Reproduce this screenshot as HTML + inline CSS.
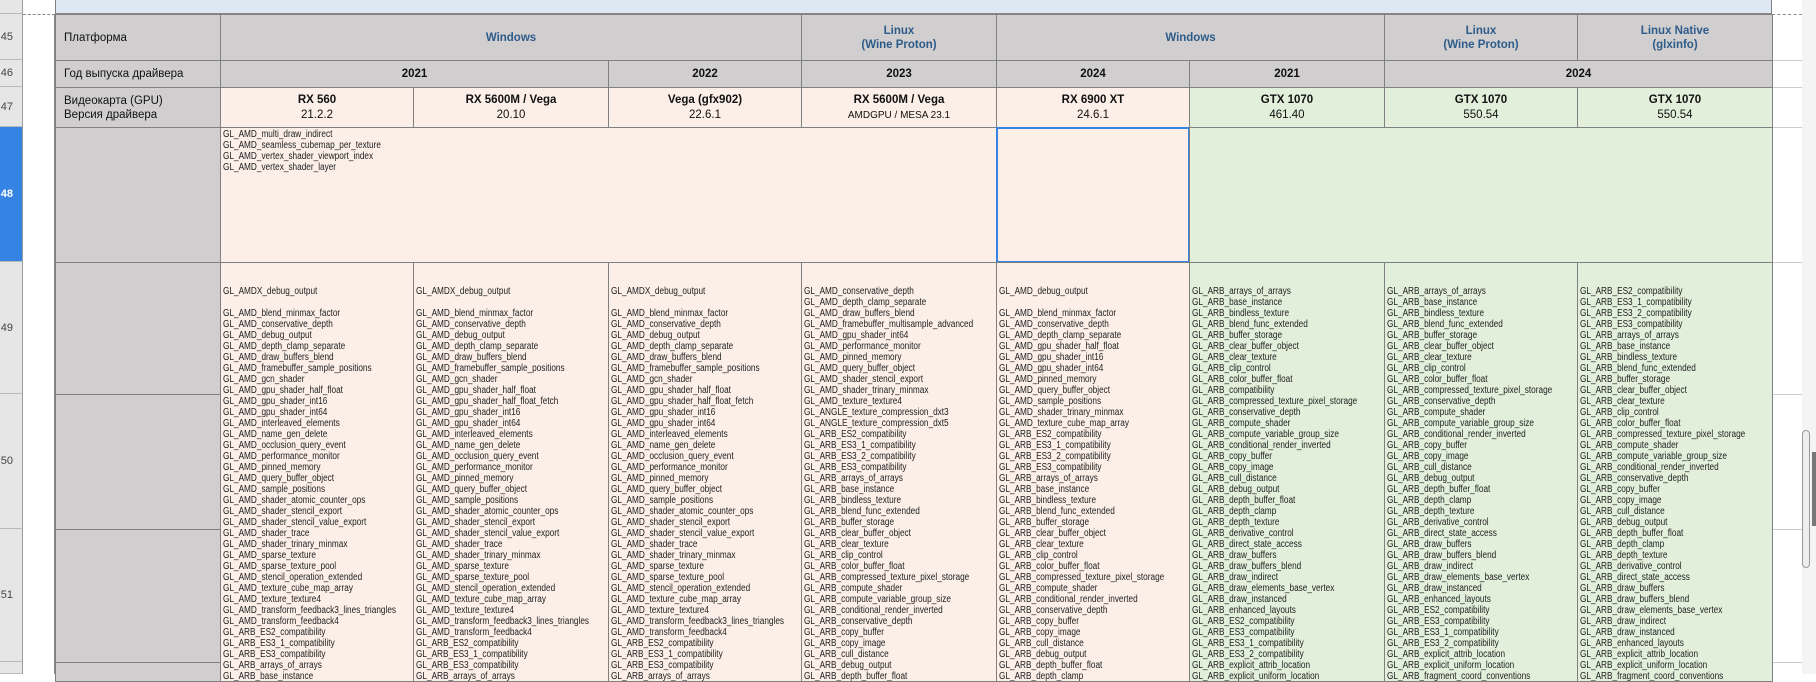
<!DOCTYPE html>
<html><head><meta charset="utf-8"><style>
*{margin:0;padding:0;box-sizing:border-box}
body{width:1816px;height:674px;overflow:hidden;background:#fff;position:relative;font-family:"Liberation Sans","DejaVu Sans",sans-serif;color:#111}
.a{position:absolute}
.rh{position:absolute;left:0;width:23px;background:#e6e6e6;border-bottom:1px solid #b8b8b8;border-right:1px solid #9a9a9a;font-size:11px;color:#444;display:flex;align-items:center;justify-content:flex-end;padding-right:9px}
.c{position:absolute;border:1px solid #808080;display:flex;align-items:center;justify-content:center;text-align:center;font-size:11.5px;overflow:hidden}
.g{background:#d0cece}
.p{background:#fbefe8}
.gr{background:#e2efda}
.blue{color:#2e5c8a;font-weight:bold;line-height:14px}
.b{font-weight:bold}
.lst{position:absolute;border:1px solid #808080;overflow:hidden;font-size:9.7px;line-height:11px;color:#222}
.lst div{transform:scaleX(0.85);transform-origin:0 0;white-space:nowrap;position:absolute;left:2px}
</style></head><body>
<!-- top band -->
<div class="a" style="left:55px;top:0;width:1717px;height:15px;background:#dde8f3;border-bottom:2px solid #8a8a8a;border-left:1px solid #808080;border-right:1px solid #808080"></div>
<div class="a" style="left:23px;top:14px;width:32px;border-top:1px dashed #888"></div>
<div class="a" style="left:1772px;top:14px;width:30px;border-top:1px dashed #888"></div>
<!-- row headers -->
<div class="rh" style="top:0;height:14px"></div>
<div class="rh" style="top:14px;height:46px">45</div>
<div class="rh" style="top:60px;height:27px">46</div>
<div class="rh" style="top:87px;height:40px">47</div>
<div class="rh" style="top:127px;height:135px;background:#3584e4;color:#fff;font-weight:bold">48</div>
<div class="rh" style="top:262px;height:132px">49</div>
<div class="rh" style="top:394px;height:135px">50</div>
<div class="rh" style="top:529px;height:133px">51</div>
<div class="rh" style="top:662px;height:12px"></div>
<div class="a" style="left:23px;top:15px;width:32px;height:659px;border-right:1px solid #888"></div>
<!-- right gridlines -->
<div class="a" style="left:1772px;top:60px;width:30px;border-top:1px solid #ccc"></div>
<div class="a" style="left:1772px;top:87px;width:30px;border-top:1px solid #ccc"></div>
<div class="a" style="left:1772px;top:127px;width:30px;border-top:1px solid #ccc"></div>
<div class="a" style="left:1772px;top:262px;width:30px;border-top:1px solid #ccc"></div>
<div class="a" style="left:1772px;top:394px;width:30px;border-top:1px solid #ccc"></div>
<div class="a" style="left:1772px;top:529px;width:30px;border-top:1px solid #ccc"></div>
<div class="a" style="left:1772px;top:662px;width:30px;border-top:1px solid #ccc"></div>
<!-- scrollbar -->
<div class="a" style="left:1802px;top:0;width:14px;height:674px;background:#f4f4f4"></div>
<div class="a" style="left:1802px;top:430px;width:8px;height:138px;border:1px solid #999;border-radius:4px;background:#eee"></div>
<div class="a" style="left:1812px;top:452px;width:4px;height:74px;background:#777"></div>

<!-- column A -->
<div class="c g" style="left:55px;top:14px;width:166px;height:47px;justify-content:flex-start;padding-left:8px;font-size:11.5px">Платформа</div>
<div class="c g" style="left:55px;top:60px;width:166px;height:28px;justify-content:flex-start;padding-left:8px">Год выпуска драйвера</div>
<div class="c g" style="left:55px;top:87px;width:166px;height:41px;justify-content:flex-start;padding-left:8px;text-align:left;line-height:14px">Видеокарта (GPU)<br>Версия драйвера</div>
<div class="c g" style="left:55px;top:127px;width:166px;height:136px"></div>
<div class="c g" style="left:55px;top:262px;width:166px;height:133px"></div>
<div class="c g" style="left:55px;top:394px;width:166px;height:136px"></div>
<div class="c g" style="left:55px;top:529px;width:166px;height:134px"></div>
<div class="c g" style="left:55px;top:662px;width:166px;height:20px"></div>

<!-- row 45 -->
<div class="c g blue" style="left:220px;top:14px;width:582px;height:47px">Windows</div>
<div class="c g blue" style="left:801px;top:14px;width:196px;height:47px">Linux<br>(Wine Proton)</div>
<div class="c g blue" style="left:996px;top:14px;width:389px;height:47px">Windows</div>
<div class="c g blue" style="left:1384px;top:14px;width:194px;height:47px">Linux<br>(Wine Proton)</div>
<div class="c g blue" style="left:1577px;top:14px;width:196px;height:47px">Linux Native<br>(glxinfo)</div>
<!-- row 46 -->
<div class="c g b" style="left:220px;top:60px;width:389px;height:28px">2021</div>
<div class="c g b" style="left:608px;top:60px;width:194px;height:28px">2022</div>
<div class="c g b" style="left:801px;top:60px;width:196px;height:28px">2023</div>
<div class="c g b" style="left:996px;top:60px;width:194px;height:28px">2024</div>
<div class="c g b" style="left:1189px;top:60px;width:196px;height:28px">2021</div>
<div class="c g b" style="left:1384px;top:60px;width:389px;height:28px">2024</div>
<!-- row 47 -->
<div class="c p" style="left:220px;top:87px;width:194px;height:41px;line-height:15px"><div><b>RX 560</b><br>21.2.2</div></div>
<div class="c p" style="left:413px;top:87px;width:196px;height:41px;line-height:15px"><div><b>RX 5600M / Vega</b><br>20.10</div></div>
<div class="c p" style="left:608px;top:87px;width:194px;height:41px;line-height:15px"><div><b>Vega (gfx902)</b><br>22.6.1</div></div>
<div class="c p" style="left:801px;top:87px;width:196px;height:41px;line-height:15px"><div><b>RX 5600M / Vega</b><br><span style="font-size:10px">AMDGPU / MESA 23.1</span></div></div>
<div class="c p" style="left:996px;top:87px;width:194px;height:41px;line-height:15px"><div><b>RX 6900 XT</b><br>24.6.1</div></div>
<div class="c gr" style="left:1189px;top:87px;width:196px;height:41px;line-height:15px"><div><b>GTX 1070</b><br>461.40</div></div>
<div class="c gr" style="left:1384px;top:87px;width:194px;height:41px;line-height:15px"><div><b>GTX 1070</b><br>550.54</div></div>
<div class="c gr" style="left:1577px;top:87px;width:196px;height:41px;line-height:15px"><div><b>GTX 1070</b><br>550.54</div></div>
<!-- row 48 -->
<div class="lst p" style="left:220px;top:127px;width:777px;height:136px"><div style="top:1px">GL_AMD_multi_draw_indirect<br>GL_AMD_seamless_cubemap_per_texture<br>GL_AMD_vertex_shader_viewport_index<br>GL_AMD_vertex_shader_layer</div></div>
<div class="lst p" style="left:996px;top:127px;width:194px;height:136px;border:2px solid #3584e4"></div>
<div class="lst gr" style="left:1189px;top:127px;width:584px;height:136px"></div>

<!-- lists -->
<div class="lst p" style="left:220px;top:262px;width:194px;height:420px"><div style="top:23px">GL_AMDX_debug_output<br><br>GL_AMD_blend_minmax_factor<br>GL_AMD_conservative_depth<br>GL_AMD_debug_output<br>GL_AMD_depth_clamp_separate<br>GL_AMD_draw_buffers_blend<br>GL_AMD_framebuffer_sample_positions<br>GL_AMD_gcn_shader<br>GL_AMD_gpu_shader_half_float<br>GL_AMD_gpu_shader_int16<br>GL_AMD_gpu_shader_int64<br>GL_AMD_interleaved_elements<br>GL_AMD_name_gen_delete<br>GL_AMD_occlusion_query_event<br>GL_AMD_performance_monitor<br>GL_AMD_pinned_memory<br>GL_AMD_query_buffer_object<br>GL_AMD_sample_positions<br>GL_AMD_shader_atomic_counter_ops<br>GL_AMD_shader_stencil_export<br>GL_AMD_shader_stencil_value_export<br>GL_AMD_shader_trace<br>GL_AMD_shader_trinary_minmax<br>GL_AMD_sparse_texture<br>GL_AMD_sparse_texture_pool<br>GL_AMD_stencil_operation_extended<br>GL_AMD_texture_cube_map_array<br>GL_AMD_texture_texture4<br>GL_AMD_transform_feedback3_lines_triangles<br>GL_AMD_transform_feedback4<br>GL_ARB_ES2_compatibility<br>GL_ARB_ES3_1_compatibility<br>GL_ARB_ES3_compatibility<br>GL_ARB_arrays_of_arrays<br>GL_ARB_base_instance</div></div>
<div class="lst p" style="left:413px;top:262px;width:196px;height:420px"><div style="top:23px">GL_AMDX_debug_output<br><br>GL_AMD_blend_minmax_factor<br>GL_AMD_conservative_depth<br>GL_AMD_debug_output<br>GL_AMD_depth_clamp_separate<br>GL_AMD_draw_buffers_blend<br>GL_AMD_framebuffer_sample_positions<br>GL_AMD_gcn_shader<br>GL_AMD_gpu_shader_half_float<br>GL_AMD_gpu_shader_half_float_fetch<br>GL_AMD_gpu_shader_int16<br>GL_AMD_gpu_shader_int64<br>GL_AMD_interleaved_elements<br>GL_AMD_name_gen_delete<br>GL_AMD_occlusion_query_event<br>GL_AMD_performance_monitor<br>GL_AMD_pinned_memory<br>GL_AMD_query_buffer_object<br>GL_AMD_sample_positions<br>GL_AMD_shader_atomic_counter_ops<br>GL_AMD_shader_stencil_export<br>GL_AMD_shader_stencil_value_export<br>GL_AMD_shader_trace<br>GL_AMD_shader_trinary_minmax<br>GL_AMD_sparse_texture<br>GL_AMD_sparse_texture_pool<br>GL_AMD_stencil_operation_extended<br>GL_AMD_texture_cube_map_array<br>GL_AMD_texture_texture4<br>GL_AMD_transform_feedback3_lines_triangles<br>GL_AMD_transform_feedback4<br>GL_ARB_ES2_compatibility<br>GL_ARB_ES3_1_compatibility<br>GL_ARB_ES3_compatibility<br>GL_ARB_arrays_of_arrays</div></div>
<div class="lst p" style="left:608px;top:262px;width:194px;height:420px"><div style="top:23px">GL_AMDX_debug_output<br><br>GL_AMD_blend_minmax_factor<br>GL_AMD_conservative_depth<br>GL_AMD_debug_output<br>GL_AMD_depth_clamp_separate<br>GL_AMD_draw_buffers_blend<br>GL_AMD_framebuffer_sample_positions<br>GL_AMD_gcn_shader<br>GL_AMD_gpu_shader_half_float<br>GL_AMD_gpu_shader_half_float_fetch<br>GL_AMD_gpu_shader_int16<br>GL_AMD_gpu_shader_int64<br>GL_AMD_interleaved_elements<br>GL_AMD_name_gen_delete<br>GL_AMD_occlusion_query_event<br>GL_AMD_performance_monitor<br>GL_AMD_pinned_memory<br>GL_AMD_query_buffer_object<br>GL_AMD_sample_positions<br>GL_AMD_shader_atomic_counter_ops<br>GL_AMD_shader_stencil_export<br>GL_AMD_shader_stencil_value_export<br>GL_AMD_shader_trace<br>GL_AMD_shader_trinary_minmax<br>GL_AMD_sparse_texture<br>GL_AMD_sparse_texture_pool<br>GL_AMD_stencil_operation_extended<br>GL_AMD_texture_cube_map_array<br>GL_AMD_texture_texture4<br>GL_AMD_transform_feedback3_lines_triangles<br>GL_AMD_transform_feedback4<br>GL_ARB_ES2_compatibility<br>GL_ARB_ES3_1_compatibility<br>GL_ARB_ES3_compatibility<br>GL_ARB_arrays_of_arrays</div></div>
<div class="lst p" style="left:801px;top:262px;width:196px;height:420px"><div style="top:23px">GL_AMD_conservative_depth<br>GL_AMD_depth_clamp_separate<br>GL_AMD_draw_buffers_blend<br>GL_AMD_framebuffer_multisample_advanced<br>GL_AMD_gpu_shader_int64<br>GL_AMD_performance_monitor<br>GL_AMD_pinned_memory<br>GL_AMD_query_buffer_object<br>GL_AMD_shader_stencil_export<br>GL_AMD_shader_trinary_minmax<br>GL_AMD_texture_texture4<br>GL_ANGLE_texture_compression_dxt3<br>GL_ANGLE_texture_compression_dxt5<br>GL_ARB_ES2_compatibility<br>GL_ARB_ES3_1_compatibility<br>GL_ARB_ES3_2_compatibility<br>GL_ARB_ES3_compatibility<br>GL_ARB_arrays_of_arrays<br>GL_ARB_base_instance<br>GL_ARB_bindless_texture<br>GL_ARB_blend_func_extended<br>GL_ARB_buffer_storage<br>GL_ARB_clear_buffer_object<br>GL_ARB_clear_texture<br>GL_ARB_clip_control<br>GL_ARB_color_buffer_float<br>GL_ARB_compressed_texture_pixel_storage<br>GL_ARB_compute_shader<br>GL_ARB_compute_variable_group_size<br>GL_ARB_conditional_render_inverted<br>GL_ARB_conservative_depth<br>GL_ARB_copy_buffer<br>GL_ARB_copy_image<br>GL_ARB_cull_distance<br>GL_ARB_debug_output<br>GL_ARB_depth_buffer_float</div></div>
<div class="lst p" style="left:996px;top:262px;width:194px;height:420px"><div style="top:23px">GL_AMD_debug_output<br><br>GL_AMD_blend_minmax_factor<br>GL_AMD_conservative_depth<br>GL_AMD_depth_clamp_separate<br>GL_AMD_gpu_shader_half_float<br>GL_AMD_gpu_shader_int16<br>GL_AMD_gpu_shader_int64<br>GL_AMD_pinned_memory<br>GL_AMD_query_buffer_object<br>GL_AMD_sample_positions<br>GL_AMD_shader_trinary_minmax<br>GL_AMD_texture_cube_map_array<br>GL_ARB_ES2_compatibility<br>GL_ARB_ES3_1_compatibility<br>GL_ARB_ES3_2_compatibility<br>GL_ARB_ES3_compatibility<br>GL_ARB_arrays_of_arrays<br>GL_ARB_base_instance<br>GL_ARB_bindless_texture<br>GL_ARB_blend_func_extended<br>GL_ARB_buffer_storage<br>GL_ARB_clear_buffer_object<br>GL_ARB_clear_texture<br>GL_ARB_clip_control<br>GL_ARB_color_buffer_float<br>GL_ARB_compressed_texture_pixel_storage<br>GL_ARB_compute_shader<br>GL_ARB_conditional_render_inverted<br>GL_ARB_conservative_depth<br>GL_ARB_copy_buffer<br>GL_ARB_copy_image<br>GL_ARB_cull_distance<br>GL_ARB_debug_output<br>GL_ARB_depth_buffer_float<br>GL_ARB_depth_clamp</div></div>
<div class="lst gr" style="left:1189px;top:262px;width:196px;height:420px"><div style="top:23px">GL_ARB_arrays_of_arrays<br>GL_ARB_base_instance<br>GL_ARB_bindless_texture<br>GL_ARB_blend_func_extended<br>GL_ARB_buffer_storage<br>GL_ARB_clear_buffer_object<br>GL_ARB_clear_texture<br>GL_ARB_clip_control<br>GL_ARB_color_buffer_float<br>GL_ARB_compatibility<br>GL_ARB_compressed_texture_pixel_storage<br>GL_ARB_conservative_depth<br>GL_ARB_compute_shader<br>GL_ARB_compute_variable_group_size<br>GL_ARB_conditional_render_inverted<br>GL_ARB_copy_buffer<br>GL_ARB_copy_image<br>GL_ARB_cull_distance<br>GL_ARB_debug_output<br>GL_ARB_depth_buffer_float<br>GL_ARB_depth_clamp<br>GL_ARB_depth_texture<br>GL_ARB_derivative_control<br>GL_ARB_direct_state_access<br>GL_ARB_draw_buffers<br>GL_ARB_draw_buffers_blend<br>GL_ARB_draw_indirect<br>GL_ARB_draw_elements_base_vertex<br>GL_ARB_draw_instanced<br>GL_ARB_enhanced_layouts<br>GL_ARB_ES2_compatibility<br>GL_ARB_ES3_compatibility<br>GL_ARB_ES3_1_compatibility<br>GL_ARB_ES3_2_compatibility<br>GL_ARB_explicit_attrib_location<br>GL_ARB_explicit_uniform_location</div></div>
<div class="lst gr" style="left:1384px;top:262px;width:194px;height:420px"><div style="top:23px">GL_ARB_arrays_of_arrays<br>GL_ARB_base_instance<br>GL_ARB_bindless_texture<br>GL_ARB_blend_func_extended<br>GL_ARB_buffer_storage<br>GL_ARB_clear_buffer_object<br>GL_ARB_clear_texture<br>GL_ARB_clip_control<br>GL_ARB_color_buffer_float<br>GL_ARB_compressed_texture_pixel_storage<br>GL_ARB_conservative_depth<br>GL_ARB_compute_shader<br>GL_ARB_compute_variable_group_size<br>GL_ARB_conditional_render_inverted<br>GL_ARB_copy_buffer<br>GL_ARB_copy_image<br>GL_ARB_cull_distance<br>GL_ARB_debug_output<br>GL_ARB_depth_buffer_float<br>GL_ARB_depth_clamp<br>GL_ARB_depth_texture<br>GL_ARB_derivative_control<br>GL_ARB_direct_state_access<br>GL_ARB_draw_buffers<br>GL_ARB_draw_buffers_blend<br>GL_ARB_draw_indirect<br>GL_ARB_draw_elements_base_vertex<br>GL_ARB_draw_instanced<br>GL_ARB_enhanced_layouts<br>GL_ARB_ES2_compatibility<br>GL_ARB_ES3_compatibility<br>GL_ARB_ES3_1_compatibility<br>GL_ARB_ES3_2_compatibility<br>GL_ARB_explicit_attrib_location<br>GL_ARB_explicit_uniform_location<br>GL_ARB_fragment_coord_conventions</div></div>
<div class="lst gr" style="left:1577px;top:262px;width:196px;height:420px"><div style="top:23px">GL_ARB_ES2_compatibility<br>GL_ARB_ES3_1_compatibility<br>GL_ARB_ES3_2_compatibility<br>GL_ARB_ES3_compatibility<br>GL_ARB_arrays_of_arrays<br>GL_ARB_base_instance<br>GL_ARB_bindless_texture<br>GL_ARB_blend_func_extended<br>GL_ARB_buffer_storage<br>GL_ARB_clear_buffer_object<br>GL_ARB_clear_texture<br>GL_ARB_clip_control<br>GL_ARB_color_buffer_float<br>GL_ARB_compressed_texture_pixel_storage<br>GL_ARB_compute_shader<br>GL_ARB_compute_variable_group_size<br>GL_ARB_conditional_render_inverted<br>GL_ARB_conservative_depth<br>GL_ARB_copy_buffer<br>GL_ARB_copy_image<br>GL_ARB_cull_distance<br>GL_ARB_debug_output<br>GL_ARB_depth_buffer_float<br>GL_ARB_depth_clamp<br>GL_ARB_depth_texture<br>GL_ARB_derivative_control<br>GL_ARB_direct_state_access<br>GL_ARB_draw_buffers<br>GL_ARB_draw_buffers_blend<br>GL_ARB_draw_elements_base_vertex<br>GL_ARB_draw_indirect<br>GL_ARB_draw_instanced<br>GL_ARB_enhanced_layouts<br>GL_ARB_explicit_attrib_location<br>GL_ARB_explicit_uniform_location<br>GL_ARB_fragment_coord_conventions</div></div>
</body></html>
